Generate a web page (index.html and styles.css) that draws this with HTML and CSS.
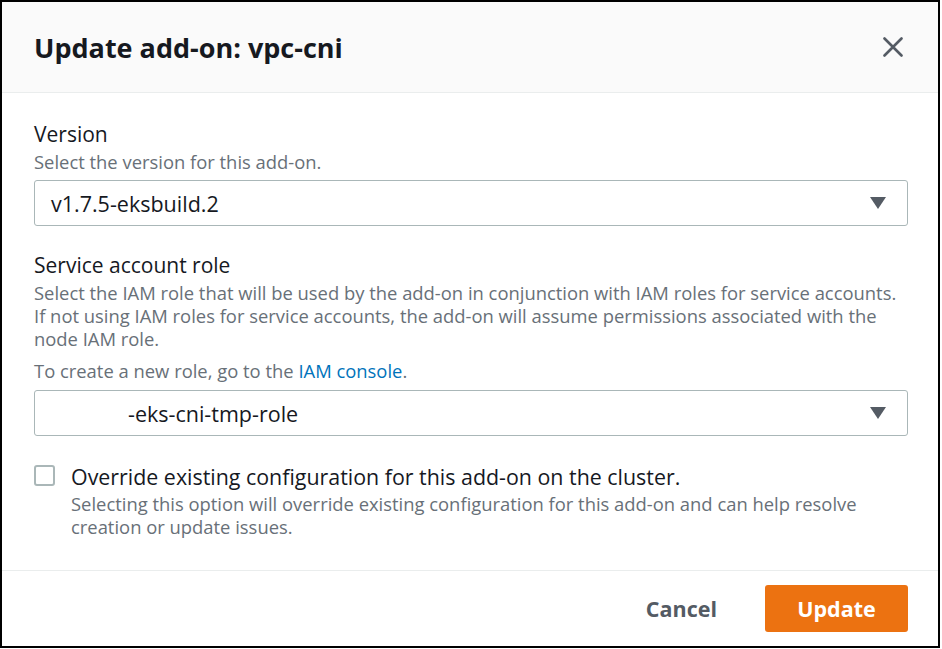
FILE: index.html
```html
<!DOCTYPE html>
<html>
<head>
<meta charset="utf-8">
<link rel="stylesheet" href="styles.css">
</head>
<body>
<div class="modal">
  <div class="header">
    <h1 class="title">Update add-on: vpc-cni</h1>
    <svg class="close" width="20" height="20" viewBox="0 0 20 20"><path d="M1.5 1.5 L18.5 18.5 M18.5 1.5 L1.5 18.5" stroke="#545b64" stroke-width="2.6" stroke-linecap="round" fill="none"/></svg>
  </div>
  <div class="body">
    <div class="field">
      <div class="label">Version</div>
      <div class="desc">Select the version for this add-on.</div>
      <div class="select"><span class="value">v1.7.5-eksbuild.2</span><span class="caret"></span></div>
    </div>
    <div class="field field2">
      <div class="label">Service account role</div>
      <div class="desc desc-wrap">Select the IAM role that will be used by the add-on in conjunction with IAM roles for service accounts. If not using IAM roles for service accounts, the add-on will assume permissions associated with the node IAM role.</div>
      <div class="desc desc-link">To create a new role, go to the <a class="link">IAM console</a>.</div>
      <div class="select select2"><span class="value value-role">-eks-cni-tmp-role</span><span class="caret"></span></div>
    </div>
    <div class="check-row">
      <span class="checkbox"></span>
      <div class="check-text">
        <div class="check-label">Override existing configuration for this add-on on the cluster.</div>
        <div class="desc">Selecting this option will override existing configuration for this add-on and can help resolve creation or update issues.</div>
      </div>
    </div>
  </div>
  <div class="footer">
    <span class="cancel">Cancel</span>
    <span class="update">Update</span>
  </div>
</div>
</body>
</html>
```
FILE: styles.css
```css
html, body { margin: 0; padding: 0; background: #fff; }
body { font-family: "Open Sans", "Noto Sans", sans-serif; color: #16191f; }
.modal {
  width: 936px;
  height: 644px;
  border: 2px solid #000;
  display: flex;
  flex-direction: column;
  background: #fff;
}
.header {
  height: 91px;
  flex: none;
  background: #fafafa;
  border-bottom: 1px solid #eaeded;
  display: flex;
  align-items: center;
  justify-content: space-between;
  padding: 0 35px 0 32px;
  box-sizing: border-box;
}
.title { margin: 0; font-size: 27px; font-weight: 700; color: #16191f; }
.close { display: block; }
.body { padding: 28px 30px 0 32px; flex: 1; }
.label { font-size: 21px; line-height: 26px; color: #16191f; }
.desc { font-size: 18.4px; line-height: 23px; color: #687078; margin-top: 3px; }
.desc-wrap { max-width: 866px; }
.select {
  margin-top: 7px;
  height: 46px;
  box-sizing: border-box;
  border: 1px solid #aab7b8;
  border-radius: 3px;
  display: flex;
  align-items: center;
  justify-content: space-between;
  padding: 0 21px 0 16px;
}
.select2 { margin-top: 8px; }
.value { font-size: 21.5px; color: #16191f; }
.value-role { padding-left: 77px; }
.caret {
  width: 0; height: 0;
  border-left: 8px solid transparent;
  border-right: 8px solid transparent;
  border-top: 12px solid #545b64;
}
.field2 { margin-top: 26px; }
.desc-link { margin-top: 9px; }
.link { color: #0073bb; text-decoration: none; }
.check-row { display: flex; margin-top: 28px; align-items: flex-start; }
.checkbox {
  width: 21px; height: 21px; box-sizing: border-box;
  border: 2px solid #aab7b8; border-radius: 3px;
  margin-top: 1px; flex: none;
}
.check-text { margin-left: 16px; }
.check-label { font-size: 21.4px; line-height: 26px; color: #16191f; }
.check-text .desc { margin-top: 1.5px; }
.footer {
  flex: none;
  border-top: 1px solid #eaeded;
  height: 75px;
  display: flex;
  align-items: center;
  justify-content: flex-end;
  padding: 0 30px 0 0;
}
.cancel { font-size: 21.5px; font-weight: 700; color: #545b64; margin-right: 48px; }
.update {
  background: #ec7211; color: #fff; font-weight: 700; font-size: 21.5px;
  width: 143px; height: 47px; border-radius: 3px;
  display: flex; align-items: center; justify-content: center;
}
```
